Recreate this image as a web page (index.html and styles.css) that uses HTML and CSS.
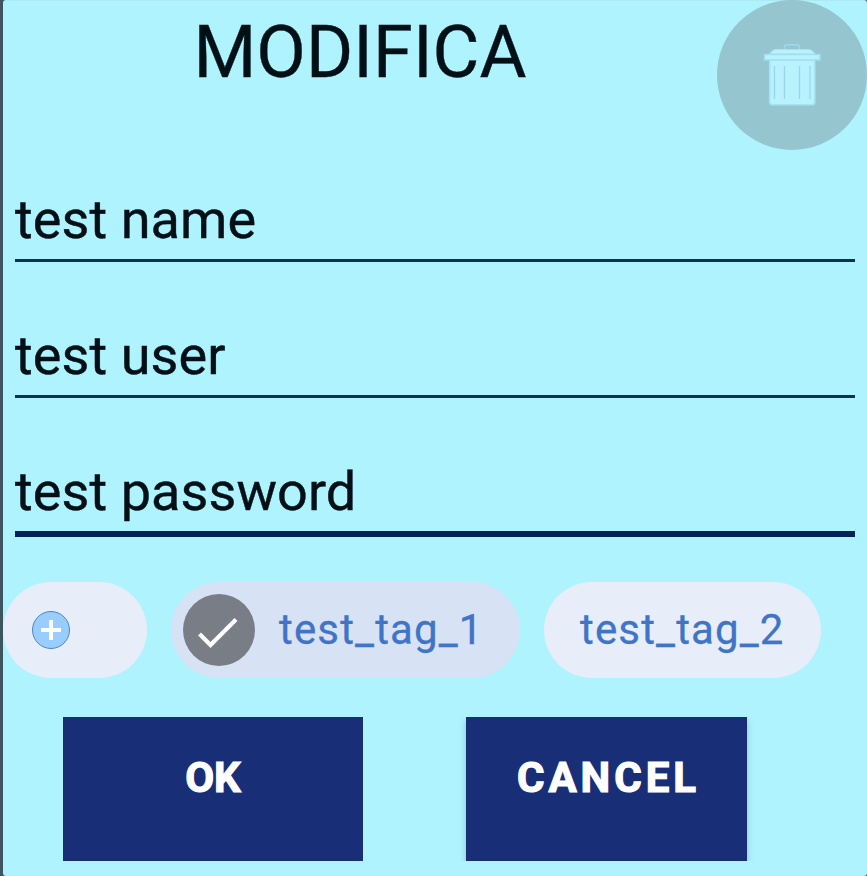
FILE: index.html
```html
<!DOCTYPE html>
<html lang="it">
<head>
<meta charset="utf-8">
<title>Modifica</title>
<link rel="stylesheet" href="styles.css">
</head>
<body>
<main class="dialog">
  <header class="header">
    <h1 class="title">MODIFICA</h1>
    <button class="delete" aria-label="Elimina">
      <svg width="62" height="66" viewBox="0 0 62 66">
        <path d="M22.500 8V6Q22.500 3.700 25 3.700H35Q37.200 3.700 37.200 6V8" fill="none" stroke="#9bd9ec" stroke-width="1.600"/>
        <path d="M7.700 18.500H52.800V61Q52.800 63.800 50 63.800H10.500Q7.700 63.800 7.700 61Z" fill="#b9f1ff" stroke="#a5e3f3" stroke-width="1.500"/>
        <path d="M7.500 13L11 9.300Q12 8.500 14 8.500H46Q48 8.500 49.500 9.300L53.500 13Z" fill="#b9f1ff" stroke="#a5e3f3" stroke-width="1"/>
        <rect x="2.500" y="13.500" width="55.500" height="5.500" fill="#b9f1ff" stroke="#9fdeef" stroke-width="1.400"/>
        <path d="M12.500 25V58M22.500 25V58M37.500 25V58M48 25V58" stroke="#98d6ee" stroke-width="1.300"/>
      </svg>
    </button>
  </header>
  <section class="fields">
    <div class="field">test name</div>
    <div class="field">test user</div>
    <div class="field field-focused">test password</div>
  </section>
  <section class="chips">
    <div class="chip chip-add">
      <svg width="38" height="38" viewBox="0 0 38 38">
        <circle cx="19" cy="19" r="18.500" fill="#99ccff" stroke="#4d87c1"/>
        <path d="M9 19H29M19 9V29" stroke="#fff" stroke-width="4"/>
      </svg>
    </div>
    <div class="chip chip-selected">
      <svg width="72" height="72" viewBox="0 0 72 72">
        <circle cx="36" cy="36" r="36" fill="#797d86"/>
        <path d="M16.500 40L27.500 51L53 25.500" fill="none" stroke="#fff" stroke-width="4.200"/>
      </svg>
      <span>test_tag_1</span>
    </div>
    <div class="chip chip-plain"><span>test_tag_2</span></div>
  </section>
  <footer class="actions">
    <button class="button button-ok">OK</button>
    <button class="button button-cancel">CANCEL</button>
  </footer>
</main>
</body>
</html>
```
FILE: styles.css
```css
* { box-sizing: border-box; }

body {
  margin: 0;
  padding-left: 3px;
  height: 876px;
  overflow: hidden;
  background: #3c555e;
  font-family: Roboto, "Liberation Sans", sans-serif;
}

.dialog {
  height: 876px;
  background: #aff3fe;
  border-top: 1px solid #aceaf2;
  border-radius: 3px;
}

.header {
  display: flex;
  height: 150px;
  margin-top: -1px;
}

.title {
  flex: 1;
  margin: 0;
  padding-top: 11px;
  color: #001017;
  font-size: 72px;
  font-weight: 400;
  line-height: 84px;
  letter-spacing: 0.1px;
  text-align: center;
  -webkit-text-stroke: 0.4px #001017;
}

.delete {
  display: flex;
  width: 150px;
  height: 150px;
  padding: 41px 0 0 45px;
  border: 0;
  border-radius: 50%;
  background: #95c6d0;
}

.fields {
  display: grid;
  gap: 62px;
  padding: 38px 12px 0;
}

.field {
  height: 74px;
  color: #001017;
  border-bottom: 3px solid #0b344c;
  font-size: 54px;
  line-height: 64px;
  letter-spacing: 0.08px;
  -webkit-text-stroke: 0.4px #001017;
}

.field-focused {
  height: 77px;
  border-bottom: 6px solid #00245a;
}

.chips {
  display: flex;
  gap: 24px;
  margin-top: 45px;
}

.chip {
  display: flex;
  align-items: center;
  height: 96px;
  border-radius: 48px;
  background: #e7eef9;
  color: #3f74c6;
  font-size: 42px;
  letter-spacing: 1.15px;
}

.chip span {
  padding-bottom: 2px;
  -webkit-text-stroke: 0.3px #3f74c6;
}

.chip-add { width: 144px; padding-left: 29px; }
.chip-selected { width: 349px; padding-left: 12px; gap: 24px; background: #d7e2f4; }
.chip-plain { width: 277px; padding-left: 36px; }

.actions {
  display: flex;
  gap: 103px;
  margin-top: 39px;
  height: 144px;
  padding-left: 60px;
  overflow: hidden;
}

.button {
  height: 144px;
  padding: 0 0 24px;
  border: 0;
  background: #182f78;
  color: #fff;
  font: 700 42px Roboto, "Liberation Sans", sans-serif;
  -webkit-text-stroke: 1.2px #fff;
}

.button-ok { width: 300px; }

.button-cancel {
  width: 281px;
  padding-left: 4px;
  letter-spacing: 4px;
  box-shadow: 0 4px 6px rgba(0, 50, 70, .25);
}
```
